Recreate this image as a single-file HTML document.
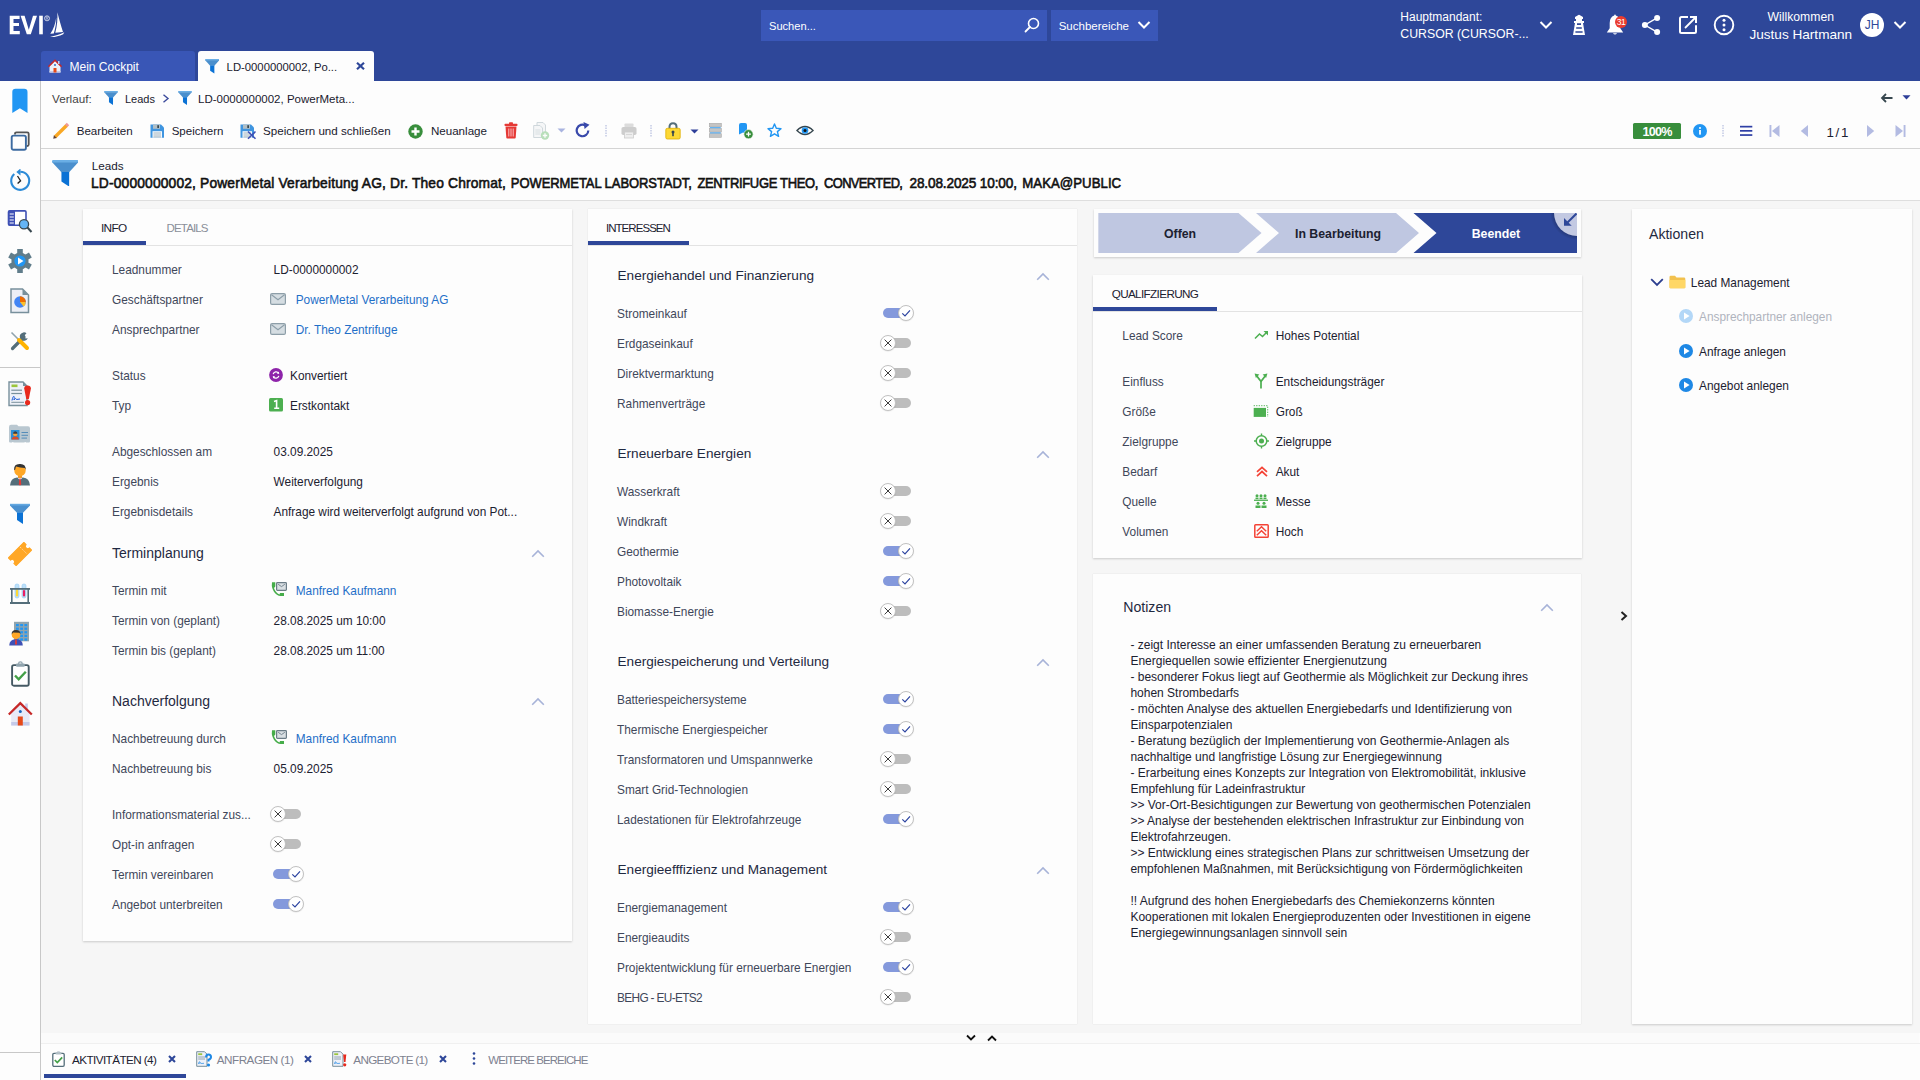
<!DOCTYPE html><html><head><meta charset="utf-8"><title>EVI Lead</title><style>
*{margin:0;padding:0;box-sizing:border-box}
html,body{width:1920px;height:1080px;overflow:hidden;background:#fdfdfd;font-family:"Liberation Sans",sans-serif}
.a{position:absolute}
.t{position:absolute;white-space:nowrap}
</style></head><body><div class="a" style="left:0px;top:0px;width:1920px;height:81px;background:#2e4799"></div>
<div class="a" style="left:41px;top:201px;width:1879px;height:832px;background:#f6f6f6"></div>
<div class="a" style="left:41px;top:148px;width:1879px;height:1px;background:#d4d4d4"></div>
<div class="a" style="left:41px;top:200px;width:1879px;height:1px;background:#dedede"></div>
<div class="a" style="left:40px;top:81px;width:1px;height:999px;background:#c8c8c8"></div>
<div class="a" style="left:0px;top:367px;width:40px;height:1px;background:#c8c8c8"></div>
<div class="a" style="left:0px;top:1052px;width:40px;height:1px;background:#c8c8c8"></div>
<div class="a" style="left:41px;top:1033px;width:1878px;height:10px;background:#fbfbfb"></div>
<div class="a" style="left:41px;top:1043px;width:1879px;height:1px;background:#f0f0f0"></div>
<div class="a" style="left:761px;top:10px;width:286px;height:31px;background:#3a57b8"></div>
<div class="t" style="left:769.0px;top:21px;font-size:11.1px;line-height:11.1px;color:#fff;font-weight:400;">Suchen...</div>
<svg class="a" style="left:1024px;top:17px;" width="16" height="16" viewBox="0 0 16 16"><circle cx="9.5" cy="6.5" r="5" fill="none" stroke="#fff" stroke-width="1.6"/><line x1="6" y1="10" x2="1.5" y2="14.5" stroke="#fff" stroke-width="1.8" stroke-linecap="round"/></svg>
<div class="a" style="left:1051px;top:10px;width:107px;height:31px;background:#3a57b8"></div>
<div class="t" style="left:1058.7px;top:21px;font-size:11.5px;line-height:11.5px;color:#fff;font-weight:400;">Suchbereiche</div>
<svg class="a" style="left:1137px;top:20px;" width="14" height="10" viewBox="0 0 14 10"><polyline points="1.5,2 7,7.5 12.5,2" fill="none" stroke="#fff" stroke-width="2"/></svg>
<div class="t" style="left:1400.3px;top:11px;font-size:12px;line-height:12px;color:#fff;font-weight:400;">Hauptmandant:</div>
<div class="t" style="left:1400.3px;top:28px;font-size:12.3px;line-height:12.3px;color:#fff;font-weight:400;">CURSOR (CURSOR-...</div>
<svg class="a" style="left:1539px;top:20px;" width="14" height="10" viewBox="0 0 14 10"><polyline points="1.5,2 7,7.5 12.5,2" fill="none" stroke="#fff" stroke-width="2"/></svg>
<div class="t" style="left:1767.6px;top:11px;font-size:12.2px;line-height:12.2px;color:#fff;font-weight:400;">Willkommen</div>
<div class="t" style="left:1749.4px;top:28px;font-size:13.6px;line-height:13.6px;color:#fff;font-weight:400;">Justus Hartmann</div>
<div class="a" style="left:1860px;top:13px;width:24px;height:24px;border-radius:50%;background:#fff;color:#2e4799;font-size:12px;line-height:24px;text-align:center">JH</div>
<svg class="a" style="left:1893px;top:20px;" width="14" height="10" viewBox="0 0 14 10"><polyline points="1.5,2 7,7.5 12.5,2" fill="none" stroke="#fff" stroke-width="2"/></svg>
<div class="a" style="left:41px;top:51px;width:154px;height:30px;background:#3956b6;border-radius:3px 3px 0 0"></div>
<div class="t" style="left:69.5px;top:61px;font-size:12.0px;line-height:12.0px;color:#fff;font-weight:400;">Mein Cockpit</div>
<div class="a" style="left:198px;top:51px;width:176px;height:30px;background:#fdfdfd;border-radius:3px 3px 0 0"></div>
<div class="t" style="left:226.6px;top:62px;font-size:11.3px;line-height:11.3px;color:#1a1a2e;font-weight:400;">LD-0000000002, Po...</div>
<div class="t" style="left:52.0px;top:93px;font-size:11.7px;line-height:11.7px;color:#444;font-weight:400;">Verlauf:</div>
<div class="t" style="left:125.0px;top:94px;font-size:11.0px;line-height:11.0px;color:#1a1a2e;font-weight:400;">Leads</div>
<div class="t" style="left:198.0px;top:94px;font-size:11.5px;line-height:11.5px;color:#1a1a2e;font-weight:400;">LD-0000000002, PowerMeta...</div>
<div class="t" style="left:76.7px;top:125px;font-size:11.6px;line-height:11.6px;color:#1a1a2e;font-weight:400;">Bearbeiten</div>
<div class="t" style="left:171.7px;top:126px;font-size:11.5px;line-height:11.5px;color:#1a1a2e;font-weight:400;">Speichern</div>
<div class="t" style="left:263.0px;top:125px;font-size:11.6px;line-height:11.6px;color:#1a1a2e;font-weight:400;">Speichern und schließen</div>
<div class="t" style="left:430.9px;top:125px;font-size:11.6px;line-height:11.6px;color:#1a1a2e;font-weight:400;">Neuanlage</div>
<div class="t" style="left:91.7px;top:160px;font-size:11.7px;line-height:11.7px;color:#1a1a2e;font-weight:400;">Leads</div>
<div class="t" style="left:91.0px;top:177px;font-size:13.8px;line-height:13.8px;color:#111;font-weight:400;letter-spacing:0.160px;-webkit-text-stroke:0.55px #111;transform:scaleY(1.1);transform-origin:0 85%">LD-0000000002, PowerMetal Verarbeitung AG, Dr. Theo Chromat,</div>
<div class="t" style="left:510.8px;top:177px;font-size:13.0px;line-height:13.0px;color:#111;font-weight:400;letter-spacing:-0.072px;-webkit-text-stroke:0.55px #111;transform:scaleY(1.1);transform-origin:0 85%">POWERMETAL LABORSTADT,</div>
<div class="t" style="left:697.4px;top:177px;font-size:13.0px;line-height:13.0px;color:#111;font-weight:400;letter-spacing:-0.344px;-webkit-text-stroke:0.55px #111;transform:scaleY(1.1);transform-origin:0 85%">ZENTRIFUGE THEO,</div>
<div class="t" style="left:824.0px;top:178px;font-size:12.9px;line-height:12.9px;color:#111;font-weight:400;letter-spacing:-0.594px;-webkit-text-stroke:0.55px #111;transform:scaleY(1.1);transform-origin:0 85%">CONVERTED,</div>
<div class="t" style="left:909.5px;top:177px;font-size:13.6px;line-height:13.6px;color:#111;font-weight:400;letter-spacing:-0.135px;-webkit-text-stroke:0.55px #111;transform:scaleY(1.1);transform-origin:0 85%">28.08.2025 10:00,</div>
<div class="t" style="left:1022.3px;top:177px;font-size:13.2px;line-height:13.2px;color:#111;font-weight:400;letter-spacing:0.041px;-webkit-text-stroke:0.55px #111;transform:scaleY(1.1);transform-origin:0 85%">MAKA@PUBLIC</div>
<div class="a" style="left:83px;top:209px;width:489px;height:732px;background:#fdfdfd;box-shadow:0 1px 2px rgba(0,0,0,0.18)"></div>
<div class="a" style="left:588px;top:209px;width:489px;height:815px;background:#fdfdfd;box-shadow:0 0 1px rgba(0,0,0,0.15)"></div>
<div class="a" style="left:1094px;top:209px;width:487px;height:48px;background:#fdfdfd;box-shadow:0 1px 2px rgba(0,0,0,0.18)"></div>
<div class="a" style="left:1093px;top:275px;width:489px;height:283px;background:#fdfdfd;box-shadow:0 1px 2px rgba(0,0,0,0.18)"></div>
<div class="a" style="left:1093px;top:574px;width:488px;height:450px;background:#fdfdfd;box-shadow:0 0 1px rgba(0,0,0,0.15)"></div>
<div class="a" style="left:1632px;top:209px;width:280px;height:815px;background:#fdfdfd;box-shadow:0 1px 2px rgba(0,0,0,0.18)"></div>
<div class="a" style="left:83px;top:245px;width:489px;height:1px;background:#e3e3e3"></div>
<div class="a" style="left:83px;top:241px;width:63px;height:4px;background:#2e4799"></div>
<div class="t" style="left:100.9px;top:223px;font-size:11.8px;line-height:11.8px;color:#1c2130;font-weight:400;letter-spacing:-0.629px;">INFO</div>
<div class="t" style="left:166.6px;top:223px;font-size:11.5px;line-height:11.5px;color:#8a8f99;font-weight:400;letter-spacing:-0.863px;">DETAILS</div>
<div class="t" style="left:112.0px;top:265px;font-size:11.85px;line-height:11.85px;color:#3f475a;font-weight:400;">Leadnummer</div>
<div class="t" style="left:273.6px;top:265px;font-size:11.85px;line-height:11.85px;color:#1c2130;font-weight:400;">LD-0000000002</div>
<div class="t" style="left:112.0px;top:295px;font-size:11.85px;line-height:11.85px;color:#3f475a;font-weight:400;">Geschäftspartner</div>
<div class="t" style="left:295.7px;top:295px;font-size:11.85px;line-height:11.85px;color:#1f6fc8;font-weight:400;">PowerMetal Verarbeitung AG</div>
<div class="t" style="left:112.0px;top:325px;font-size:11.85px;line-height:11.85px;color:#3f475a;font-weight:400;">Ansprechpartner</div>
<div class="t" style="left:295.7px;top:325px;font-size:11.85px;line-height:11.85px;color:#1f6fc8;font-weight:400;">Dr. Theo Zentrifuge</div>
<div class="t" style="left:112.0px;top:371px;font-size:11.85px;line-height:11.85px;color:#3f475a;font-weight:400;">Status</div>
<div class="t" style="left:290.0px;top:371px;font-size:11.85px;line-height:11.85px;color:#1c2130;font-weight:400;">Konvertiert</div>
<div class="t" style="left:112.0px;top:401px;font-size:11.85px;line-height:11.85px;color:#3f475a;font-weight:400;">Typ</div>
<div class="t" style="left:290.0px;top:401px;font-size:11.85px;line-height:11.85px;color:#1c2130;font-weight:400;">Erstkontakt</div>
<div class="t" style="left:112.0px;top:447px;font-size:11.85px;line-height:11.85px;color:#3f475a;font-weight:400;">Abgeschlossen am</div>
<div class="t" style="left:273.6px;top:447px;font-size:11.85px;line-height:11.85px;color:#1c2130;font-weight:400;">03.09.2025</div>
<div class="t" style="left:112.0px;top:477px;font-size:11.85px;line-height:11.85px;color:#3f475a;font-weight:400;">Ergebnis</div>
<div class="t" style="left:273.6px;top:477px;font-size:11.85px;line-height:11.85px;color:#1c2130;font-weight:400;">Weiterverfolgung</div>
<div class="t" style="left:112.0px;top:507px;font-size:11.85px;line-height:11.85px;color:#3f475a;font-weight:400;">Ergebnisdetails</div>
<div class="t" style="left:273.6px;top:507px;font-size:11.85px;line-height:11.85px;color:#1c2130;font-weight:400;">Anfrage wird weiterverfolgt aufgrund von Pot...</div>
<div class="t" style="left:112.0px;top:586px;font-size:11.85px;line-height:11.85px;color:#3f475a;font-weight:400;">Termin mit</div>
<div class="t" style="left:295.7px;top:586px;font-size:11.85px;line-height:11.85px;color:#1f6fc8;font-weight:400;">Manfred Kaufmann</div>
<div class="t" style="left:112.0px;top:616px;font-size:11.85px;line-height:11.85px;color:#3f475a;font-weight:400;">Termin von (geplant)</div>
<div class="t" style="left:273.6px;top:616px;font-size:11.85px;line-height:11.85px;color:#1c2130;font-weight:400;">28.08.2025 um 10:00</div>
<div class="t" style="left:112.0px;top:646px;font-size:11.85px;line-height:11.85px;color:#3f475a;font-weight:400;">Termin bis (geplant)</div>
<div class="t" style="left:273.6px;top:646px;font-size:11.85px;line-height:11.85px;color:#1c2130;font-weight:400;">28.08.2025 um 11:00</div>
<div class="t" style="left:112.0px;top:734px;font-size:11.85px;line-height:11.85px;color:#3f475a;font-weight:400;">Nachbetreuung durch</div>
<div class="t" style="left:295.7px;top:734px;font-size:11.85px;line-height:11.85px;color:#1f6fc8;font-weight:400;">Manfred Kaufmann</div>
<div class="t" style="left:112.0px;top:764px;font-size:11.85px;line-height:11.85px;color:#3f475a;font-weight:400;">Nachbetreuung bis</div>
<div class="t" style="left:273.6px;top:764px;font-size:11.85px;line-height:11.85px;color:#1c2130;font-weight:400;">05.09.2025</div>
<div class="t" style="left:112.0px;top:546px;font-size:14.0px;line-height:14.0px;color:#1f2941;font-weight:400;">Terminplanung</div>
<svg class="a" style="left:531px;top:548.5px;" width="14" height="9" viewBox="0 0 14 9"><polyline points="1.2,7.8 7,2 12.8,7.8" fill="none" stroke="#a7b3d8" stroke-width="1.6"/></svg>
<div class="t" style="left:112.0px;top:694px;font-size:14.0px;line-height:14.0px;color:#1f2941;font-weight:400;">Nachverfolgung</div>
<svg class="a" style="left:531px;top:696.5px;" width="14" height="9" viewBox="0 0 14 9"><polyline points="1.2,7.8 7,2 12.8,7.8" fill="none" stroke="#a7b3d8" stroke-width="1.6"/></svg>
<div class="t" style="left:112.0px;top:810px;font-size:11.85px;line-height:11.85px;color:#3f475a;font-weight:400;">Informationsmaterial zus...</div>
<div class="a" style="left:277px;top:809px;width:24px;height:10px;border-radius:5px;background:#bdbdbd"></div>
<div class="a" style="left:270px;top:806px;width:16px;height:16px;border-radius:50%;background:#fff;border:1.3px solid #c2c2c2;box-shadow:0 0.5px 1px rgba(0,0,0,0.10)"></div>
<svg class="a" style="left:270px;top:806px;" width="16" height="16" viewBox="0 0 16 16"><path d="M4.6,4.6 L11.4,11.4 M11.4,4.6 L4.6,11.4" stroke="#333" stroke-width="0.95"/></svg>
<div class="t" style="left:112.0px;top:840px;font-size:11.85px;line-height:11.85px;color:#3f475a;font-weight:400;">Opt-in anfragen</div>
<div class="a" style="left:277px;top:839px;width:24px;height:10px;border-radius:5px;background:#bdbdbd"></div>
<div class="a" style="left:270px;top:836px;width:16px;height:16px;border-radius:50%;background:#fff;border:1.3px solid #c2c2c2;box-shadow:0 0.5px 1px rgba(0,0,0,0.10)"></div>
<svg class="a" style="left:270px;top:836px;" width="16" height="16" viewBox="0 0 16 16"><path d="M4.6,4.6 L11.4,11.4 M11.4,4.6 L4.6,11.4" stroke="#333" stroke-width="0.95"/></svg>
<div class="t" style="left:112.0px;top:870px;font-size:11.85px;line-height:11.85px;color:#3f475a;font-weight:400;">Termin vereinbaren</div>
<div class="a" style="left:273px;top:869px;width:24px;height:10px;border-radius:5px;background:#8499dc"></div>
<div class="a" style="left:288px;top:866px;width:16px;height:16px;border-radius:50%;background:#fff;border:1.3px solid #c2c2c2;box-shadow:0 0.5px 1px rgba(0,0,0,0.10)"></div>
<svg class="a" style="left:288px;top:866px;" width="16" height="16" viewBox="0 0 16 16"><polyline points="4.3,8.4 7,11 12,5.3" fill="none" stroke="#2c44a0" stroke-width="1.2"/></svg>
<div class="t" style="left:112.0px;top:900px;font-size:11.85px;line-height:11.85px;color:#3f475a;font-weight:400;">Angebot unterbreiten</div>
<div class="a" style="left:273px;top:899px;width:24px;height:10px;border-radius:5px;background:#8499dc"></div>
<div class="a" style="left:288px;top:896px;width:16px;height:16px;border-radius:50%;background:#fff;border:1.3px solid #c2c2c2;box-shadow:0 0.5px 1px rgba(0,0,0,0.10)"></div>
<svg class="a" style="left:288px;top:896px;" width="16" height="16" viewBox="0 0 16 16"><polyline points="4.3,8.4 7,11 12,5.3" fill="none" stroke="#2c44a0" stroke-width="1.2"/></svg>
<div class="a" style="left:588px;top:245px;width:489px;height:1px;background:#e3e3e3"></div>
<div class="a" style="left:588px;top:241px;width:101px;height:4px;background:#2e4799"></div>
<div class="t" style="left:605.9px;top:223px;font-size:11.5px;line-height:11.5px;color:#1c2130;font-weight:400;letter-spacing:-0.943px;">INTERESSEN</div>
<div class="t" style="left:617.5px;top:269px;font-size:13.6px;line-height:13.6px;color:#1f2941;font-weight:400;">Energiehandel und Finanzierung</div>
<svg class="a" style="left:1036px;top:271.5px;" width="14" height="9" viewBox="0 0 14 9"><polyline points="1.2,7.8 7,2 12.8,7.8" fill="none" stroke="#a7b3d8" stroke-width="1.6"/></svg>
<div class="t" style="left:617.0px;top:309px;font-size:11.85px;line-height:11.85px;color:#3f475a;font-weight:400;">Stromeinkauf</div>
<div class="a" style="left:883px;top:307.5px;width:24px;height:10px;border-radius:5px;background:#8499dc"></div>
<div class="a" style="left:898px;top:304.5px;width:16px;height:16px;border-radius:50%;background:#fff;border:1.3px solid #c2c2c2;box-shadow:0 0.5px 1px rgba(0,0,0,0.10)"></div>
<svg class="a" style="left:898px;top:304.5px;" width="16" height="16" viewBox="0 0 16 16"><polyline points="4.3,8.4 7,11 12,5.3" fill="none" stroke="#2c44a0" stroke-width="1.2"/></svg>
<div class="t" style="left:617.0px;top:339px;font-size:11.85px;line-height:11.85px;color:#3f475a;font-weight:400;">Erdgaseinkauf</div>
<div class="a" style="left:887px;top:337.5px;width:24px;height:10px;border-radius:5px;background:#bdbdbd"></div>
<div class="a" style="left:880px;top:334.5px;width:16px;height:16px;border-radius:50%;background:#fff;border:1.3px solid #c2c2c2;box-shadow:0 0.5px 1px rgba(0,0,0,0.10)"></div>
<svg class="a" style="left:880px;top:334.5px;" width="16" height="16" viewBox="0 0 16 16"><path d="M4.6,4.6 L11.4,11.4 M11.4,4.6 L4.6,11.4" stroke="#333" stroke-width="0.95"/></svg>
<div class="t" style="left:617.0px;top:369px;font-size:11.85px;line-height:11.85px;color:#3f475a;font-weight:400;">Direktvermarktung</div>
<div class="a" style="left:887px;top:367.5px;width:24px;height:10px;border-radius:5px;background:#bdbdbd"></div>
<div class="a" style="left:880px;top:364.5px;width:16px;height:16px;border-radius:50%;background:#fff;border:1.3px solid #c2c2c2;box-shadow:0 0.5px 1px rgba(0,0,0,0.10)"></div>
<svg class="a" style="left:880px;top:364.5px;" width="16" height="16" viewBox="0 0 16 16"><path d="M4.6,4.6 L11.4,11.4 M11.4,4.6 L4.6,11.4" stroke="#333" stroke-width="0.95"/></svg>
<div class="t" style="left:617.0px;top:399px;font-size:11.85px;line-height:11.85px;color:#3f475a;font-weight:400;">Rahmenverträge</div>
<div class="a" style="left:887px;top:397.5px;width:24px;height:10px;border-radius:5px;background:#bdbdbd"></div>
<div class="a" style="left:880px;top:394.5px;width:16px;height:16px;border-radius:50%;background:#fff;border:1.3px solid #c2c2c2;box-shadow:0 0.5px 1px rgba(0,0,0,0.10)"></div>
<svg class="a" style="left:880px;top:394.5px;" width="16" height="16" viewBox="0 0 16 16"><path d="M4.6,4.6 L11.4,11.4 M11.4,4.6 L4.6,11.4" stroke="#333" stroke-width="0.95"/></svg>
<div class="t" style="left:617.5px;top:447px;font-size:13.6px;line-height:13.6px;color:#1f2941;font-weight:400;">Erneuerbare Energien</div>
<svg class="a" style="left:1036px;top:449.5px;" width="14" height="9" viewBox="0 0 14 9"><polyline points="1.2,7.8 7,2 12.8,7.8" fill="none" stroke="#a7b3d8" stroke-width="1.6"/></svg>
<div class="t" style="left:617.0px;top:487px;font-size:11.85px;line-height:11.85px;color:#3f475a;font-weight:400;">Wasserkraft</div>
<div class="a" style="left:887px;top:485.5px;width:24px;height:10px;border-radius:5px;background:#bdbdbd"></div>
<div class="a" style="left:880px;top:482.5px;width:16px;height:16px;border-radius:50%;background:#fff;border:1.3px solid #c2c2c2;box-shadow:0 0.5px 1px rgba(0,0,0,0.10)"></div>
<svg class="a" style="left:880px;top:482.5px;" width="16" height="16" viewBox="0 0 16 16"><path d="M4.6,4.6 L11.4,11.4 M11.4,4.6 L4.6,11.4" stroke="#333" stroke-width="0.95"/></svg>
<div class="t" style="left:617.0px;top:517px;font-size:11.85px;line-height:11.85px;color:#3f475a;font-weight:400;">Windkraft</div>
<div class="a" style="left:887px;top:515.5px;width:24px;height:10px;border-radius:5px;background:#bdbdbd"></div>
<div class="a" style="left:880px;top:512.5px;width:16px;height:16px;border-radius:50%;background:#fff;border:1.3px solid #c2c2c2;box-shadow:0 0.5px 1px rgba(0,0,0,0.10)"></div>
<svg class="a" style="left:880px;top:512.5px;" width="16" height="16" viewBox="0 0 16 16"><path d="M4.6,4.6 L11.4,11.4 M11.4,4.6 L4.6,11.4" stroke="#333" stroke-width="0.95"/></svg>
<div class="t" style="left:617.0px;top:547px;font-size:11.85px;line-height:11.85px;color:#3f475a;font-weight:400;">Geothermie</div>
<div class="a" style="left:883px;top:545.5px;width:24px;height:10px;border-radius:5px;background:#8499dc"></div>
<div class="a" style="left:898px;top:542.5px;width:16px;height:16px;border-radius:50%;background:#fff;border:1.3px solid #c2c2c2;box-shadow:0 0.5px 1px rgba(0,0,0,0.10)"></div>
<svg class="a" style="left:898px;top:542.5px;" width="16" height="16" viewBox="0 0 16 16"><polyline points="4.3,8.4 7,11 12,5.3" fill="none" stroke="#2c44a0" stroke-width="1.2"/></svg>
<div class="t" style="left:617.0px;top:577px;font-size:11.85px;line-height:11.85px;color:#3f475a;font-weight:400;">Photovoltaik</div>
<div class="a" style="left:883px;top:575.5px;width:24px;height:10px;border-radius:5px;background:#8499dc"></div>
<div class="a" style="left:898px;top:572.5px;width:16px;height:16px;border-radius:50%;background:#fff;border:1.3px solid #c2c2c2;box-shadow:0 0.5px 1px rgba(0,0,0,0.10)"></div>
<svg class="a" style="left:898px;top:572.5px;" width="16" height="16" viewBox="0 0 16 16"><polyline points="4.3,8.4 7,11 12,5.3" fill="none" stroke="#2c44a0" stroke-width="1.2"/></svg>
<div class="t" style="left:617.0px;top:607px;font-size:11.85px;line-height:11.85px;color:#3f475a;font-weight:400;">Biomasse-Energie</div>
<div class="a" style="left:887px;top:605.5px;width:24px;height:10px;border-radius:5px;background:#bdbdbd"></div>
<div class="a" style="left:880px;top:602.5px;width:16px;height:16px;border-radius:50%;background:#fff;border:1.3px solid #c2c2c2;box-shadow:0 0.5px 1px rgba(0,0,0,0.10)"></div>
<svg class="a" style="left:880px;top:602.5px;" width="16" height="16" viewBox="0 0 16 16"><path d="M4.6,4.6 L11.4,11.4 M11.4,4.6 L4.6,11.4" stroke="#333" stroke-width="0.95"/></svg>
<div class="t" style="left:617.5px;top:655px;font-size:13.6px;line-height:13.6px;color:#1f2941;font-weight:400;">Energiespeicherung und Verteilung</div>
<svg class="a" style="left:1036px;top:657.5px;" width="14" height="9" viewBox="0 0 14 9"><polyline points="1.2,7.8 7,2 12.8,7.8" fill="none" stroke="#a7b3d8" stroke-width="1.6"/></svg>
<div class="t" style="left:617.0px;top:695px;font-size:11.85px;line-height:11.85px;color:#3f475a;font-weight:400;">Batteriespeichersysteme</div>
<div class="a" style="left:883px;top:693.5px;width:24px;height:10px;border-radius:5px;background:#8499dc"></div>
<div class="a" style="left:898px;top:690.5px;width:16px;height:16px;border-radius:50%;background:#fff;border:1.3px solid #c2c2c2;box-shadow:0 0.5px 1px rgba(0,0,0,0.10)"></div>
<svg class="a" style="left:898px;top:690.5px;" width="16" height="16" viewBox="0 0 16 16"><polyline points="4.3,8.4 7,11 12,5.3" fill="none" stroke="#2c44a0" stroke-width="1.2"/></svg>
<div class="t" style="left:617.0px;top:725px;font-size:11.85px;line-height:11.85px;color:#3f475a;font-weight:400;">Thermische Energiespeicher</div>
<div class="a" style="left:883px;top:723.5px;width:24px;height:10px;border-radius:5px;background:#8499dc"></div>
<div class="a" style="left:898px;top:720.5px;width:16px;height:16px;border-radius:50%;background:#fff;border:1.3px solid #c2c2c2;box-shadow:0 0.5px 1px rgba(0,0,0,0.10)"></div>
<svg class="a" style="left:898px;top:720.5px;" width="16" height="16" viewBox="0 0 16 16"><polyline points="4.3,8.4 7,11 12,5.3" fill="none" stroke="#2c44a0" stroke-width="1.2"/></svg>
<div class="t" style="left:617.0px;top:755px;font-size:11.85px;line-height:11.85px;color:#3f475a;font-weight:400;">Transformatoren und Umspannwerke</div>
<div class="a" style="left:887px;top:753.5px;width:24px;height:10px;border-radius:5px;background:#bdbdbd"></div>
<div class="a" style="left:880px;top:750.5px;width:16px;height:16px;border-radius:50%;background:#fff;border:1.3px solid #c2c2c2;box-shadow:0 0.5px 1px rgba(0,0,0,0.10)"></div>
<svg class="a" style="left:880px;top:750.5px;" width="16" height="16" viewBox="0 0 16 16"><path d="M4.6,4.6 L11.4,11.4 M11.4,4.6 L4.6,11.4" stroke="#333" stroke-width="0.95"/></svg>
<div class="t" style="left:617.0px;top:785px;font-size:11.85px;line-height:11.85px;color:#3f475a;font-weight:400;">Smart Grid-Technologien</div>
<div class="a" style="left:887px;top:783.5px;width:24px;height:10px;border-radius:5px;background:#bdbdbd"></div>
<div class="a" style="left:880px;top:780.5px;width:16px;height:16px;border-radius:50%;background:#fff;border:1.3px solid #c2c2c2;box-shadow:0 0.5px 1px rgba(0,0,0,0.10)"></div>
<svg class="a" style="left:880px;top:780.5px;" width="16" height="16" viewBox="0 0 16 16"><path d="M4.6,4.6 L11.4,11.4 M11.4,4.6 L4.6,11.4" stroke="#333" stroke-width="0.95"/></svg>
<div class="t" style="left:617.0px;top:815px;font-size:11.85px;line-height:11.85px;color:#3f475a;font-weight:400;">Ladestationen für Elektrofahrzeuge</div>
<div class="a" style="left:883px;top:813.5px;width:24px;height:10px;border-radius:5px;background:#8499dc"></div>
<div class="a" style="left:898px;top:810.5px;width:16px;height:16px;border-radius:50%;background:#fff;border:1.3px solid #c2c2c2;box-shadow:0 0.5px 1px rgba(0,0,0,0.10)"></div>
<svg class="a" style="left:898px;top:810.5px;" width="16" height="16" viewBox="0 0 16 16"><polyline points="4.3,8.4 7,11 12,5.3" fill="none" stroke="#2c44a0" stroke-width="1.2"/></svg>
<div class="t" style="left:617.5px;top:863px;font-size:13.6px;line-height:13.6px;color:#1f2941;font-weight:400;">Energieefffizienz und Management</div>
<svg class="a" style="left:1036px;top:865.5px;" width="14" height="9" viewBox="0 0 14 9"><polyline points="1.2,7.8 7,2 12.8,7.8" fill="none" stroke="#a7b3d8" stroke-width="1.6"/></svg>
<div class="t" style="left:617.0px;top:903px;font-size:11.85px;line-height:11.85px;color:#3f475a;font-weight:400;">Energiemanagement</div>
<div class="a" style="left:883px;top:901.5px;width:24px;height:10px;border-radius:5px;background:#8499dc"></div>
<div class="a" style="left:898px;top:898.5px;width:16px;height:16px;border-radius:50%;background:#fff;border:1.3px solid #c2c2c2;box-shadow:0 0.5px 1px rgba(0,0,0,0.10)"></div>
<svg class="a" style="left:898px;top:898.5px;" width="16" height="16" viewBox="0 0 16 16"><polyline points="4.3,8.4 7,11 12,5.3" fill="none" stroke="#2c44a0" stroke-width="1.2"/></svg>
<div class="t" style="left:617.0px;top:933px;font-size:11.85px;line-height:11.85px;color:#3f475a;font-weight:400;">Energieaudits</div>
<div class="a" style="left:887px;top:931.5px;width:24px;height:10px;border-radius:5px;background:#bdbdbd"></div>
<div class="a" style="left:880px;top:928.5px;width:16px;height:16px;border-radius:50%;background:#fff;border:1.3px solid #c2c2c2;box-shadow:0 0.5px 1px rgba(0,0,0,0.10)"></div>
<svg class="a" style="left:880px;top:928.5px;" width="16" height="16" viewBox="0 0 16 16"><path d="M4.6,4.6 L11.4,11.4 M11.4,4.6 L4.6,11.4" stroke="#333" stroke-width="0.95"/></svg>
<div class="t" style="left:617.0px;top:963px;font-size:11.85px;line-height:11.85px;color:#3f475a;font-weight:400;">Projektentwicklung für erneuerbare Energien</div>
<div class="a" style="left:883px;top:961.5px;width:24px;height:10px;border-radius:5px;background:#8499dc"></div>
<div class="a" style="left:898px;top:958.5px;width:16px;height:16px;border-radius:50%;background:#fff;border:1.3px solid #c2c2c2;box-shadow:0 0.5px 1px rgba(0,0,0,0.10)"></div>
<svg class="a" style="left:898px;top:958.5px;" width="16" height="16" viewBox="0 0 16 16"><polyline points="4.3,8.4 7,11 12,5.3" fill="none" stroke="#2c44a0" stroke-width="1.2"/></svg>
<div class="t" style="left:617.0px;top:993px;font-size:11.85px;line-height:11.85px;color:#3f475a;font-weight:400;letter-spacing:-0.65px">BEHG - EU-ETS2</div>
<div class="a" style="left:887px;top:991.5px;width:24px;height:10px;border-radius:5px;background:#bdbdbd"></div>
<div class="a" style="left:880px;top:988.5px;width:16px;height:16px;border-radius:50%;background:#fff;border:1.3px solid #c2c2c2;box-shadow:0 0.5px 1px rgba(0,0,0,0.10)"></div>
<svg class="a" style="left:880px;top:988.5px;" width="16" height="16" viewBox="0 0 16 16"><path d="M4.6,4.6 L11.4,11.4 M11.4,4.6 L4.6,11.4" stroke="#333" stroke-width="0.95"/></svg>
<svg class="a" style="left:270px;top:293px;" width="16" height="12" viewBox="0 0 16 12"><rect x="0.6" y="0.6" width="14.8" height="10.8" rx="1.5" fill="#d5dde2" stroke="#8d9ea8" stroke-width="1.2"/><polyline points="1.5,1.8 8,6.8 14.5,1.8" fill="none" stroke="#8d9ea8" stroke-width="1.1"/></svg>
<svg class="a" style="left:270px;top:323px;" width="16" height="12" viewBox="0 0 16 12"><rect x="0.6" y="0.6" width="14.8" height="10.8" rx="1.5" fill="#d5dde2" stroke="#8d9ea8" stroke-width="1.2"/><polyline points="1.5,1.8 8,6.8 14.5,1.8" fill="none" stroke="#8d9ea8" stroke-width="1.1"/></svg>
<svg class="a" style="left:270.5px;top:582px;" width="16" height="15" viewBox="0 0 16 15"><path d="M1,0.3 L4.3,0.3 L4.3,4.5 L3,6 C4,9 6,11.5 8.5,12.5 L9,11 L13,11 L13,14 L9.5,14 C5,13.5 1.5,9 0.8,4 Z" fill="#46ad4a"/><rect x="5.6" y="0.6" width="9.8" height="7.8" rx="0.8" fill="#d9dfe3" stroke="#6b7c87" stroke-width="1.2"/><polyline points="7.2,2.3 10.5,4.6 13.8,2.3" fill="none" stroke="#6b7c87" stroke-width="0.9"/></svg>
<svg class="a" style="left:270.5px;top:730px;" width="16" height="15" viewBox="0 0 16 15"><path d="M1,0.3 L4.3,0.3 L4.3,4.5 L3,6 C4,9 6,11.5 8.5,12.5 L9,11 L13,11 L13,14 L9.5,14 C5,13.5 1.5,9 0.8,4 Z" fill="#46ad4a"/><rect x="5.6" y="0.6" width="9.8" height="7.8" rx="0.8" fill="#d9dfe3" stroke="#6b7c87" stroke-width="1.2"/><polyline points="7.2,2.3 10.5,4.6 13.8,2.3" fill="none" stroke="#6b7c87" stroke-width="0.9"/></svg>
<svg class="a" style="left:269px;top:368px;" width="14" height="14" viewBox="0 0 14 14"><circle cx="7" cy="7" r="6.9" fill="#8e24aa"/><path d="M4.2,6.2 A3,3 0 0 1 9.6,5.2 M9.8,7.8 A3,3 0 0 1 4.4,8.8" fill="none" stroke="#fff" stroke-width="1.3"/><path d="M9.9,3.6 L10.2,6 L7.9,5.6Z M4.1,10.4 L3.8,8 L6.1,8.4Z" fill="#fff"/></svg>
<svg class="a" style="left:269px;top:398px;" width="14" height="14" viewBox="0 0 14 14"><rect x="0" y="0" width="14" height="13.5" rx="1.5" fill="#4caf50"/><path d="M5,3.5 L7.6,2.6 L7.6,10.2 L10.2,10.2 M5.2,10.2 L7.6,10.2" fill="none" stroke="#fff" stroke-width="1.6"/></svg>
<svg class="a" style="left:1094px;top:209px;" width="487" height="48" viewBox="0 0 487 48"><polygon points="4.3,4 144.5,4 167.5,24 144.5,44 4.3,44" fill="#bfc7e1"/><polygon points="162,4 302,4 325,24 302,44 162,44 185,24" fill="#bfc7e1"/><polygon points="319.5,4 483,4 483,44 319.5,44 342.5,24" fill="#2e4799"/><defs><radialGradient id="sh" cx="483" cy="4" r="27" gradientUnits="userSpaceOnUse"><stop offset="0.8" stop-color="#000" stop-opacity="0.25"/><stop offset="1" stop-color="#000" stop-opacity="0"/></radialGradient><clipPath id="cp"><rect x="300" y="4" width="183" height="40"/></clipPath></defs><g clip-path="url(#cp)"><circle cx="483" cy="4" r="27" fill="url(#sh)"/><circle cx="483" cy="4" r="23" fill="#c3c9e2"/><line x1="482.5" y1="4.5" x2="473" y2="14" stroke="#2e4799" stroke-width="2"/><polygon points="470,9 470,16.8 477.7,16.8" fill="#2e4799"/></g></svg>
<div class="t" style="left:1164.0px;top:228px;font-size:12.3px;line-height:12.3px;color:#1c2130;font-weight:700;">Offen</div>
<div class="t" style="left:1295.0px;top:228px;font-size:12.3px;line-height:12.3px;color:#1c2130;font-weight:700;">In Bearbeitung</div>
<div class="t" style="left:1471.7px;top:228px;font-size:12.3px;line-height:12.3px;color:#fff;font-weight:700;">Beendet</div>
<div class="a" style="left:1093px;top:311px;width:489px;height:1px;background:#e3e3e3"></div>
<div class="a" style="left:1093px;top:307px;width:124px;height:4px;background:#2e4799"></div>
<div class="t" style="left:1111.7px;top:288px;font-size:11.7px;line-height:11.7px;color:#1c2130;font-weight:400;letter-spacing:-0.634px;">QUALIFZIERUNG</div>
<div class="t" style="left:1122.3px;top:331px;font-size:11.85px;line-height:11.85px;color:#3f475a;font-weight:400;">Lead Score</div>
<div class="t" style="left:1275.7px;top:331px;font-size:11.85px;line-height:11.85px;color:#1c2130;font-weight:400;">Hohes Potential</div>
<div class="t" style="left:1122.3px;top:377px;font-size:11.85px;line-height:11.85px;color:#3f475a;font-weight:400;">Einfluss</div>
<div class="t" style="left:1275.7px;top:377px;font-size:11.85px;line-height:11.85px;color:#1c2130;font-weight:400;">Entscheidungsträger</div>
<div class="t" style="left:1122.3px;top:407px;font-size:11.85px;line-height:11.85px;color:#3f475a;font-weight:400;">Größe</div>
<div class="t" style="left:1275.7px;top:407px;font-size:11.85px;line-height:11.85px;color:#1c2130;font-weight:400;">Groß</div>
<div class="t" style="left:1122.3px;top:437px;font-size:11.85px;line-height:11.85px;color:#3f475a;font-weight:400;">Zielgruppe</div>
<div class="t" style="left:1275.7px;top:437px;font-size:11.85px;line-height:11.85px;color:#1c2130;font-weight:400;">Zielgruppe</div>
<div class="t" style="left:1122.3px;top:467px;font-size:11.85px;line-height:11.85px;color:#3f475a;font-weight:400;">Bedarf</div>
<div class="t" style="left:1275.7px;top:467px;font-size:11.85px;line-height:11.85px;color:#1c2130;font-weight:400;">Akut</div>
<div class="t" style="left:1122.3px;top:497px;font-size:11.85px;line-height:11.85px;color:#3f475a;font-weight:400;">Quelle</div>
<div class="t" style="left:1275.7px;top:497px;font-size:11.85px;line-height:11.85px;color:#1c2130;font-weight:400;">Messe</div>
<div class="t" style="left:1122.3px;top:527px;font-size:11.85px;line-height:11.85px;color:#3f475a;font-weight:400;">Volumen</div>
<div class="t" style="left:1275.7px;top:527px;font-size:11.85px;line-height:11.85px;color:#1c2130;font-weight:400;">Hoch</div>
<svg class="a" style="left:1254px;top:330px;" width="15" height="10" viewBox="0 0 15 10"><polyline points="1,8.5 5.5,4 8.5,6.5 13,2" fill="none" stroke="#4caf50" stroke-width="1.5"/><polygon points="9.5,1 14,1 14,5.5" fill="#4caf50"/></svg>
<svg class="a" style="left:1254px;top:373px;" width="14" height="16" viewBox="0 0 14 16"><path d="M7,15.5 L7,9 C7,7.5 4.5,6 3,3.2 M7,9 C7,7.5 9.5,6 11,3.2" fill="none" stroke="#4caf50" stroke-width="1.7"/><polygon points="0.6,0.6 5.4,1.6 1.9,5" fill="#4caf50"/><polygon points="13.4,0.6 8.6,1.6 12.1,5" fill="#4caf50"/></svg>
<svg class="a" style="left:1253px;top:405px;" width="16" height="13" viewBox="0 0 16 13"><rect x="0.7" y="2.9" width="12.3" height="9" fill="#4caf50"/><path d="M0.7,0.7 L14.7,0.7 L14.7,12" fill="none" stroke="#4caf50" stroke-width="1" stroke-dasharray="1.2,1.3"/></svg>
<svg class="a" style="left:1253.5px;top:433px;" width="15" height="16" viewBox="0 0 15 16"><circle cx="7.5" cy="8" r="5.3" fill="none" stroke="#4caf50" stroke-width="1.5"/><circle cx="7.5" cy="8" r="2.5" fill="#4caf50"/><path d="M7.5,0.5 V2.7 M7.5,13.3 V15.5 M0,8 H2.2 M12.8,8 H15" stroke="#4caf50" stroke-width="1.4"/></svg>
<svg class="a" style="left:1255.5px;top:466px;" width="12" height="11" viewBox="0 0 12 11"><polyline points="1,5.9 6,1.3 11,5.9" fill="none" stroke="#f44336" stroke-width="1.7"/><polyline points="1,10.1 6,5.5 11,10.1" fill="none" stroke="#f44336" stroke-width="1.7"/></svg>
<svg class="a" style="left:1254px;top:493.5px;" width="14" height="15" viewBox="0 0 14 15"><g fill="#4caf50"><circle cx="3" cy="1.8" r="1.5"/><circle cx="7" cy="1.8" r="1.5"/><circle cx="11" cy="1.8" r="1.5"/><rect x="1.5" y="3.6" width="3" height="1.5"/><rect x="5.5" y="3.6" width="3" height="1.5"/><rect x="9.5" y="3.6" width="3" height="1.5"/><rect x="0" y="5.6" width="14" height="1.3"/><circle cx="4" cy="9.3" r="1.5"/><circle cx="10" cy="9.3" r="1.5"/><rect x="1.5" y="11.5" width="5" height="2.5"/><rect x="7.5" y="11.5" width="5" height="2.5"/></g></svg>
<svg class="a" style="left:1253.5px;top:524px;" width="15" height="14" viewBox="0 0 15 14"><rect x="0.8" y="0.8" width="13.4" height="12.4" rx="0.8" fill="none" stroke="#f44336" stroke-width="1.5"/><polyline points="2.8,7.3 7.5,2.8 12.2,7.3" fill="none" stroke="#f44336" stroke-width="1.5"/><polyline points="2.8,11.3 7.5,6.8 12.2,11.3" fill="none" stroke="#f44336" stroke-width="1.5"/></svg>
<div class="t" style="left:1123.3px;top:600px;font-size:14.1px;line-height:14.1px;color:#1f2941;font-weight:400;">Notizen</div>
<svg class="a" style="left:1540px;top:603px;" width="14" height="9" viewBox="0 0 14 9"><polyline points="1.2,7.8 7,2 12.8,7.8" fill="none" stroke="#a7b3d8" stroke-width="1.6"/></svg>
<div class="t" style="left:1130.4px;top:639px;font-size:12.0px;line-height:12.0px;color:#1c2130;font-weight:400;">- zeigt Interesse an einer umfassenden Beratung zu erneuerbaren</div>
<div class="t" style="left:1130.4px;top:655px;font-size:12.0px;line-height:12.0px;color:#1c2130;font-weight:400;">Energiequellen sowie effizienter Energienutzung</div>
<div class="t" style="left:1130.4px;top:671px;font-size:12.0px;line-height:12.0px;color:#1c2130;font-weight:400;">- besonderer Fokus liegt auf Geothermie als Möglichkeit zur Deckung ihres</div>
<div class="t" style="left:1130.4px;top:687px;font-size:12.0px;line-height:12.0px;color:#1c2130;font-weight:400;">hohen Strombedarfs</div>
<div class="t" style="left:1130.4px;top:703px;font-size:12.0px;line-height:12.0px;color:#1c2130;font-weight:400;">- möchten Analyse des aktuellen Energiebedarfs und Identifizierung von</div>
<div class="t" style="left:1130.4px;top:719px;font-size:12.0px;line-height:12.0px;color:#1c2130;font-weight:400;">Einsparpotenzialen</div>
<div class="t" style="left:1130.4px;top:735px;font-size:12.0px;line-height:12.0px;color:#1c2130;font-weight:400;">- Beratung bezüglich der Implementierung von Geothermie-Anlagen als</div>
<div class="t" style="left:1130.4px;top:751px;font-size:12.0px;line-height:12.0px;color:#1c2130;font-weight:400;">nachhaltige und langfristige Lösung zur Energiegewinnung</div>
<div class="t" style="left:1130.4px;top:767px;font-size:12.0px;line-height:12.0px;color:#1c2130;font-weight:400;">- Erarbeitung eines Konzepts zur Integration von Elektromobilität, inklusive</div>
<div class="t" style="left:1130.4px;top:783px;font-size:12.0px;line-height:12.0px;color:#1c2130;font-weight:400;">Empfehlung für Ladeinfrastruktur</div>
<div class="t" style="left:1130.4px;top:799px;font-size:12.0px;line-height:12.0px;color:#1c2130;font-weight:400;">&gt;&gt; Vor-Ort-Besichtigungen zur Bewertung von geothermischen Potenzialen</div>
<div class="t" style="left:1130.4px;top:815px;font-size:12.0px;line-height:12.0px;color:#1c2130;font-weight:400;">&gt;&gt; Analyse der bestehenden elektrischen Infrastruktur zur Einbindung von</div>
<div class="t" style="left:1130.4px;top:831px;font-size:12.0px;line-height:12.0px;color:#1c2130;font-weight:400;">Elektrofahrzeugen.</div>
<div class="t" style="left:1130.4px;top:847px;font-size:12.0px;line-height:12.0px;color:#1c2130;font-weight:400;">&gt;&gt; Entwicklung eines strategischen Plans zur schrittweisen Umsetzung der</div>
<div class="t" style="left:1130.4px;top:863px;font-size:12.0px;line-height:12.0px;color:#1c2130;font-weight:400;">empfohlenen Maßnahmen, mit Berücksichtigung von Fördermöglichkeiten</div>
<div class="t" style="left:1130.4px;top:895px;font-size:12.0px;line-height:12.0px;color:#1c2130;font-weight:400;">!! Aufgrund des hohen Energiebedarfs des Chemiekonzerns könnten</div>
<div class="t" style="left:1130.4px;top:911px;font-size:12.0px;line-height:12.0px;color:#1c2130;font-weight:400;">Kooperationen mit lokalen Energieproduzenten oder Investitionen in eigene</div>
<div class="t" style="left:1130.4px;top:927px;font-size:12.0px;line-height:12.0px;color:#1c2130;font-weight:400;">Energiegewinnungsanlagen sinnvoll sein</div>
<div class="t" style="left:1649.0px;top:227px;font-size:14.1px;line-height:14.1px;color:#1f2941;font-weight:400;">Aktionen</div>
<svg class="a" style="left:1650px;top:278px;" width="14" height="9" viewBox="0 0 14 9"><polyline points="1.2,1.2 7,7 12.8,1.2" fill="none" stroke="#2c3e8f" stroke-width="1.8"/></svg>
<svg class="a" style="left:1669px;top:275px;" width="17" height="14" viewBox="0 0 17 14"><path d="M0.5,2 Q0.5,0.8 1.7,0.8 L6,0.8 L7.5,2.5 L15,2.5 Q16.3,2.5 16.3,3.8 L16.3,12.5 Q16.3,13.3 15.3,13.3 L1.5,13.3 Q0.5,13.3 0.5,12.3Z" fill="#f2c14e"/><path d="M0.5,5 L16.3,5 L16.3,12.5 Q16.3,13.3 15.3,13.3 L1.5,13.3 Q0.5,13.3 0.5,12.3Z" fill="#ffd766"/></svg>
<div class="t" style="left:1690.8px;top:278px;font-size:11.85px;line-height:11.85px;color:#1c2130;font-weight:400;">Lead Management</div>
<svg class="a" style="left:1679px;top:309.2px;" width="14" height="14" viewBox="0 0 14 14"><circle cx="7" cy="7" r="7" fill="#b3d7f7"/><polygon points="5,3.6 10.6,7 5,10.4" fill="#fff"/></svg>
<div class="t" style="left:1699.0px;top:312px;font-size:11.85px;line-height:11.85px;color:#b0b4bd;font-weight:400;">Ansprechpartner anlegen</div>
<svg class="a" style="left:1679px;top:344px;" width="14" height="14" viewBox="0 0 14 14"><circle cx="7" cy="7" r="7" fill="#1e88e5"/><polygon points="5,3.6 10.6,7 5,10.4" fill="#fff"/></svg>
<div class="t" style="left:1699.0px;top:347px;font-size:11.85px;line-height:11.85px;color:#1c2130;font-weight:400;">Anfrage anlegen</div>
<svg class="a" style="left:1679px;top:378px;" width="14" height="14" viewBox="0 0 14 14"><circle cx="7" cy="7" r="7" fill="#1e88e5"/><polygon points="5,3.6 10.6,7 5,10.4" fill="#fff"/></svg>
<div class="t" style="left:1699.0px;top:381px;font-size:11.9px;line-height:11.9px;color:#1c2130;font-weight:400;">Angebot anlegen</div>
<svg class="a" style="left:1620px;top:611px;" width="8" height="10" viewBox="0 0 8 10"><polyline points="1.5,1 6,5 1.5,9" fill="none" stroke="#222" stroke-width="2"/></svg>
<svg class="a" style="left:12px;top:88px;" width="16" height="26" viewBox="0 0 16 26"><path d="M0.3,4 Q0.3,0.7 3.6,0.7 L12.2,0.7 Q15.5,0.7 15.5,4 L15.5,25 L7.9,20.2 L0.3,25Z" fill="#2196f3"/></svg>
<svg class="a" style="left:10px;top:131px;" width="20" height="20" viewBox="0 0 20 20"><path d="M5,3.5 V2.8 Q5,1.3 6.5,1.3 L17.2,1.3 Q18.7,1.3 18.7,2.8 V13.5 Q18.7,15 17.2,15 H16.5" fill="none" stroke="#555" stroke-width="1.8"/><rect x="1.7" y="4.6" width="14.2" height="14.2" rx="1.8" fill="none" stroke="#3b6aa0" stroke-width="1.9"/></svg>
<svg class="a" style="left:9px;top:169px;" width="23" height="23" viewBox="0 0 23 23"><path d="M5.3,5 A9,9 0 1 0 11.3,2.8" fill="none" stroke="#2d8bd7" stroke-width="2.1"/><polygon points="11.5,-0.5 11.5,6.5 7.3,3" fill="#2d8bd7"/><polyline points="8.5,7 11.6,11.8 8.6,14.6" fill="none" stroke="#222" stroke-width="1.3"/></svg>
<svg class="a" style="left:7px;top:210px;" width="26" height="24" viewBox="0 0 26 24"><rect x="1.5" y="0.9" width="17.5" height="14.3" rx="1.2" fill="#fff" stroke="#3f51b5" stroke-width="1.6"/><rect x="1.5" y="0.9" width="6.5" height="14.3" fill="#3f51b5"/><g stroke="#fff" stroke-width="1"><line x1="2.7" y1="4" x2="6.8" y2="4"/><line x1="2.7" y1="7" x2="6.8" y2="7"/><line x1="2.7" y1="10" x2="6.8" y2="10"/><line x1="2.7" y1="13" x2="6.8" y2="13"/></g><line x1="20" y1="17" x2="24.5" y2="22" stroke="#37474f" stroke-width="2"/><circle cx="17" cy="14.3" r="4.6" fill="#64b5f6" stroke="#37474f" stroke-width="1.3"/></svg>
<svg class="a" style="left:8px;top:249px;" width="25" height="25" viewBox="0 0 25 25"><g transform="translate(12,12)" fill="#607d8b"><circle r="8.6"/><rect x="-2.8" y="-12" width="5.6" height="6" transform="rotate(0)"/><rect x="-2.8" y="-12" width="5.6" height="6" transform="rotate(60)"/><rect x="-2.8" y="-12" width="5.6" height="6" transform="rotate(120)"/><rect x="-2.8" y="-12" width="5.6" height="6" transform="rotate(180)"/><rect x="-2.8" y="-12" width="5.6" height="6" transform="rotate(240)"/><rect x="-2.8" y="-12" width="5.6" height="6" transform="rotate(300)"/></g><circle cx="12" cy="12" r="5.6" fill="#2196f3"/><polygon points="10,8.6 15.5,12 10,15.4" fill="#fff"/></svg>
<svg class="a" style="left:10px;top:288px;" width="20" height="26" viewBox="0 0 20 26"><path d="M1,1 L12.5,1 L18.5,7 L18.5,24.5 L1,24.5Z" fill="#eceff6" stroke="#78909c" stroke-width="1.5"/><polygon points="12.5,1 18.5,7 12.5,7" fill="#78909c"/><circle cx="10" cy="14" r="5.8" fill="#4285f4"/><path d="M10,14 L10,8.2 A5.8,5.8 0 0 1 15.8,14Z" fill="#ef6c00"/><path d="M10,14 L15.8,14 A5.8,5.8 0 0 1 13.6,18.6Z" fill="#fbc02d"/></svg>
<svg class="a" style="left:10px;top:331px;" width="20" height="20" viewBox="0 0 20 20"><line x1="1.5" y1="1.5" x2="10" y2="10" stroke="#90a4ae" stroke-width="1.6"/><path d="M16.5,2.2 A4.2,4.2 0 1 0 17.8,7.3 L15.6,7.4 L14.3,5.7 L15.3,3.6Z" fill="#546e7a"/><line x1="14" y1="6" x2="2.5" y2="17.5" stroke="#546e7a" stroke-width="3.2" stroke-linecap="round"/><line x1="9" y1="9" x2="17" y2="17" stroke="#ffb300" stroke-width="4" stroke-linecap="round"/></svg>
<svg class="a" style="left:8px;top:381px;" width="24" height="26" viewBox="0 0 24 26"><path d="M1,1 L15,1 L19,5 L19,24.5 L1,24.5Z" fill="#eef1f8" stroke="#78909c" stroke-width="1.4"/><polygon points="15,1 19,5 15,5" fill="#78909c"/><rect x="3.5" y="3.5" width="6" height="2.6" fill="#9bc53d"/><line x1="3.3" y1="9.2" x2="14" y2="9.2" stroke="#78909c" stroke-width="1.2"/><line x1="3.3" y1="12.5" x2="14" y2="12.5" stroke="#78909c" stroke-width="1.2"/><line x1="3.3" y1="21.3" x2="16" y2="21.3" stroke="#78909c" stroke-width="1"/><path d="M4,19.5 C5,14 7,14 6,19 C7,17 8,17 8.5,18.5 L12,18" fill="none" stroke="#1e5bd8" stroke-width="1"/><path d="M16.2,7.5 Q16.2,4.6 19.5,4.6 Q22.9,4.6 22.9,7.5 L20.8,18.2 L18.3,18.2Z" fill="#e8291c"/><circle cx="19.6" cy="21.6" r="2.6" fill="#e8291c"/></svg>
<svg class="a" style="left:8px;top:424px;" width="23" height="20" viewBox="0 0 23 20"><path d="M1,3 Q1,0.8 3,0.8 L9,0.8 L10.5,2.3 L20,2.3 Q22,2.3 22,4.3 L22,17.3 Q22,18.5 20.8,18.5 L2.2,18.5 Q1,18.5 1,17.3Z" fill="#b9c7d0"/><rect x="3" y="6" width="8.5" height="9.5" fill="#2c8fd6"/><circle cx="7.25" cy="10.2" r="2.1" fill="#f4a23a"/><path d="M5.1,9.8 Q5,7.3 7.25,7.3 Q9.5,7.3 9.4,9.8Z" fill="#3a3a3a"/><path d="M3.6,15.5 Q4,12.6 7.25,12.6 Q10.5,12.6 10.9,15.5Z" fill="#d84a2a"/><g stroke="#4a86b5" stroke-width="0.9"><line x1="13.5" y1="8.5" x2="20" y2="8.5"/><line x1="13.5" y1="11.3" x2="20" y2="11.3"/><line x1="13.5" y1="14.1" x2="19" y2="14.1"/></g><rect x="4" y="18.3" width="1.5" height="1.7" fill="#fff"/><rect x="16.5" y="18.3" width="1.5" height="1.7" fill="#fff"/></svg>
<svg class="a" style="left:10px;top:461px;" width="21" height="25" viewBox="0 0 21 25"><path d="M0,24.6 Q0.5,17 7,16.5 L13,16.5 Q19.5,17 20,24.6Z" fill="#546e7a"/><polygon points="7.5,16.5 12.5,16.5 10,19.5" fill="#fff"/><polygon points="9.3,17.5 10.7,17.5 11.2,23.5 10,24.4 8.8,23.5" fill="#e53935"/><rect x="8" y="13" width="4" height="4" fill="#f39c2a"/><circle cx="10" cy="9.5" r="5.7" fill="#ffa726"/><path d="M4.2,9 Q3.5,3 9.5,3 Q16,2.5 15.8,9 L14.8,7 Q10,6.5 6,5.5 L5,9Z" fill="#333"/></svg>
<svg class="a" style="left:10px;top:503px;" width="21" height="22" viewBox="0 0 21 22"><rect x="0" y="0.8" width="20" height="2.2" fill="#64a8e0"/><polygon points="0,2.5 20,2.5 13,9.8 7,9.8" fill="#4a90cf"/><polygon points="7,9.5 13,9.5 13,21 7,17" fill="#0b72d5"/></svg>
<svg class="a" style="left:8px;top:542px;" width="24" height="24" viewBox="0 0 24 24"><g transform="translate(12,12) rotate(-45)"><path d="M-11,-5.5 L11,-5.5 L11,-2.3 A2.3,2.3 0 0 0 11,2.3 L11,5.5 L-11,5.5 L-11,2.3 A2.3,2.3 0 0 0 -11,-2.3Z" fill="#ffa726" stroke="#ffa726" stroke-width="1" stroke-linejoin="round"/><line x1="5" y1="-5" x2="5" y2="5" stroke="#ffe0b2" stroke-width="0.9" stroke-dasharray="1.3,1.3"/></g></svg>
<svg class="a" style="left:10px;top:583px;" width="21" height="22" viewBox="0 0 21 22"><rect x="5" y="1" width="4" height="14" rx="1.8" fill="#bde0f8" stroke="#90caf9" stroke-width="0.6"/><rect x="12" y="1" width="4" height="14" rx="1.8" fill="#bde0f8" stroke="#90caf9" stroke-width="0.6"/><rect x="5.9" y="6" width="2.2" height="7.5" rx="1.1" fill="#fdd835"/><rect x="12.9" y="7" width="2.2" height="6.5" rx="1.1" fill="#e91e63"/><g fill="#546e7a"><rect x="0" y="5" width="20" height="1.8"/><rect x="0" y="19" width="20" height="2"/><rect x="1" y="5" width="1.6" height="15"/><rect x="17.4" y="5" width="1.6" height="15"/></g></svg>
<svg class="a" style="left:9px;top:621px;" width="21" height="25" viewBox="0 0 21 25"><rect x="5" y="0.8" width="15" height="19.5" fill="#90a4ae"/><g fill="#2196f3"><rect x="7.0" y="3.0" width="2.8" height="2.2"/><rect x="11.2" y="3.0" width="2.8" height="2.2"/><rect x="15.4" y="3.0" width="2.8" height="2.2"/><rect x="7.0" y="6.6" width="2.8" height="2.2"/><rect x="11.2" y="6.6" width="2.8" height="2.2"/><rect x="15.4" y="6.6" width="2.8" height="2.2"/><rect x="7.0" y="10.2" width="2.8" height="2.2"/><rect x="11.2" y="10.2" width="2.8" height="2.2"/><rect x="15.4" y="10.2" width="2.8" height="2.2"/><rect x="7.0" y="13.8" width="2.8" height="2.2"/><rect x="11.2" y="13.8" width="2.8" height="2.2"/><rect x="15.4" y="13.8" width="2.8" height="2.2"/><rect x="7.0" y="17.4" width="2.8" height="2.2"/><rect x="11.2" y="17.4" width="2.8" height="2.2"/><rect x="15.4" y="17.4" width="2.8" height="2.2"/></g><path d="M0.2,24.6 Q0.5,18.5 6.5,18.3 L8,18.3 Q13.5,18.5 13.8,24.6Z" fill="#3f51b5"/><polygon points="6.3,18.3 7.7,18.3 8,23 7,24 6,23" fill="#e53935"/><circle cx="7" cy="13.8" r="4.3" fill="#ffa726"/><path d="M2.7,13.6 Q2.3,9 7,9 Q11.8,9 11.4,13.5 L10.5,11.8 L4,11.5Z" fill="#333"/></svg>
<svg class="a" style="left:11px;top:661px;" width="19" height="26" viewBox="0 0 19 26"><rect x="1.1" y="4.1" width="16.6" height="20.6" rx="1.8" fill="#fff" stroke="#455a64" stroke-width="1.9"/><rect x="5" y="2.6" width="8.8" height="3.2" rx="1" fill="#90a4ae"/><circle cx="9.4" cy="2.6" r="1.8" fill="none" stroke="#90a4ae" stroke-width="1.2"/><polyline points="4,14.5 7.7,18.3 14.8,10.8" fill="none" stroke="#43a047" stroke-width="2.4"/></svg>
<svg class="a" style="left:8px;top:701px;" width="25" height="25" viewBox="0 0 25 25"><rect x="17.2" y="2.5" width="2.6" height="5.5" fill="#c5cae9"/><polygon points="12.3,3.5 21.5,12 21.5,24.5 3.2,24.5 3.2,12" fill="#e8eaf6"/><rect x="3.2" y="21" width="18.3" height="3.5" fill="#c5cae9"/><polyline points="0.8,13.5 12.3,2.2 23.8,13.5" fill="none" stroke="#c62828" stroke-width="2.3"/><rect x="9.8" y="15.5" width="5" height="9" fill="#e64a19"/><circle cx="12.3" cy="10.5" r="1.5" fill="#1565c0"/></svg>
<svg class="a" style="left:9px;top:12px;overflow:visible" width="58" height="26" viewBox="0 0 58 26"><g fill="#fff"><path d="M0.7,3.7 H10.6 V6.9 H4.5 V10.9 H10 V14 H4.5 V19.1 H10.8 V22.3 H0.7Z"/><path d="M11.6,3.7 H15.6 L19.8,17.8 L24,3.7 H28 L21.8,22.3 H17.8Z"/><rect x="30.2" y="3.7" width="3.6" height="18.6"/><path d="M48.4,0.3 C50,7 52,14 54,20 L46.3,20.8 C48.2,14 48.7,7 48.4,0.3Z"/><path d="M47.2,5.5 C46.5,12 44.5,17 41.3,21.8 L44.8,21.6 C46.6,16 47.4,10 47.2,5.5Z"/><path d="M41,25 C46,24 51,22.5 55.3,20.3 L54.2,22.2 C50,24 45.5,25.3 41,25Z"/></g><circle cx="38" cy="6.3" r="2.5" fill="none" stroke="#fff" stroke-width="0.7"/><path d="M37.2,7.8 V4.9 H38.3 Q39.1,4.9 39.1,5.7 Q39.1,6.4 38.2,6.4 L39.1,7.8" fill="none" stroke="#fff" stroke-width="0.5"/></svg>
<svg class="a" style="left:1568px;top:12px;" width="22" height="26" viewBox="0 0 22 26"><path fill="#fff" fill-rule="evenodd" d="M10.4,3 Q11,2.6 11.6,3 L15,5 L15,7 L14,7 L14,9 L16,9 L16,11 L15,11 L17,23 L5,23 L7,11 L6,11 L6,9 L8,9 L8,7 L7,7 L7,5Z M9,11.3 H13 V12.9 H9Z M8.2,15.2 H13.8 V16.8 H8.2Z M7.4,19.2 H14.6 V20.8 H7.4Z"/></svg>
<svg class="a" style="left:1606px;top:14px;overflow:visible" width="18" height="22" viewBox="0 0 18 22"><path d="M8.2,1.6 Q8.2,0.6 9,0.6 Q9.8,0.6 9.8,1.6 Q14.3,3.2 14.3,9 L14.3,14.2 L17.2,18.6 L0.8,18.6 L3.7,14.2 L3.7,9 Q3.7,3.2 8.2,1.6Z" fill="#fff"/><path d="M6.9,19.3 Q9,21.8 11.1,19.3Z" fill="#fff"/></svg>
<div class="a" style="left:1615px;top:16px;width:12px;height:12px;border-radius:50%;background:#ea3b2e;color:#fff;font-size:8.5px;line-height:12px;text-align:center;letter-spacing:-0.6px;font-weight:400">31</div>
<svg class="a" style="left:1641px;top:14px;" width="21" height="22" viewBox="0 0 21 22"><g fill="#fff"><circle cx="16.1" cy="3.9" r="3.0"/><circle cx="3.9" cy="11" r="3.0"/><circle cx="16.1" cy="18.1" r="3.0"/></g><path d="M16.1,3.9 L3.9,11 L16.1,18.1" fill="none" stroke="#fff" stroke-width="1.4"/></svg>
<svg class="a" style="left:1679px;top:16px;" width="18" height="18" viewBox="0 0 18 18"><path d="M9,1 H2.5 Q1,1 1,2.5 V15.5 Q1,17 2.5,17 H15.5 Q17,17 17,15.5 V9.3" fill="none" stroke="#fff" stroke-width="2"/><path d="M11,1 H17 V7" fill="none" stroke="#fff" stroke-width="2"/><line x1="16.5" y1="1.5" x2="6" y2="12" stroke="#fff" stroke-width="1.8"/></svg>
<svg class="a" style="left:1713px;top:14px;" width="22" height="22" viewBox="0 0 22 22"><circle cx="11" cy="11" r="9.3" fill="none" stroke="#fff" stroke-width="1.9"/><g fill="#fff"><circle cx="11" cy="6.3" r="1.5"/><circle cx="11" cy="11" r="1.5"/><circle cx="11" cy="15.7" r="1.5"/></g></svg>
<svg class="a" style="left:204.5px;top:59px;" width="14.5" height="14.5" viewBox="0 0 20 20"><rect x="0" y="0" width="20" height="2.3" rx="1" fill="#6aaee5"/><polygon points="0.3,1.8 19.7,1.8 12.9,9.3 7.1,9.3" fill="#4a8fcd"/><polygon points="7.1,9 12.9,9 12.9,20 7.1,16.2" fill="#0b72d5"/></svg>
<svg class="a" style="left:104px;top:91px;" width="14" height="14" viewBox="0 0 20 20"><rect x="0" y="0" width="20" height="2.3" rx="1" fill="#6aaee5"/><polygon points="0.3,1.8 19.7,1.8 12.9,9.3 7.1,9.3" fill="#4a8fcd"/><polygon points="7.1,9 12.9,9 12.9,20 7.1,16.2" fill="#0b72d5"/></svg>
<svg class="a" style="left:178px;top:91px;" width="14" height="14" viewBox="0 0 20 20"><rect x="0" y="0" width="20" height="2.3" rx="1" fill="#6aaee5"/><polygon points="0.3,1.8 19.7,1.8 12.9,9.3 7.1,9.3" fill="#4a8fcd"/><polygon points="7.1,9 12.9,9 12.9,20 7.1,16.2" fill="#0b72d5"/></svg>
<svg class="a" style="left:51.7px;top:159.5px;" width="26.6" height="26.6" viewBox="0 0 20 20"><rect x="0" y="0" width="20" height="2.3" rx="1" fill="#6aaee5"/><polygon points="0.3,1.8 19.7,1.8 12.9,9.3 7.1,9.3" fill="#4a8fcd"/><polygon points="7.1,9 12.9,9 12.9,20 7.1,16.2" fill="#0b72d5"/></svg>
<svg class="a" style="left:48px;top:59px;" width="14" height="14" viewBox="0 0 14 14"><polygon points="7,1.5 12.5,7 12.5,13.5 1.5,13.5 1.5,7" fill="#eceff7"/><rect x="1.5" y="12" width="11" height="1.5" fill="#c5cae9"/><polyline points="0.4,7.6 7,1.2 13.6,7.6" fill="none" stroke="#c62828" stroke-width="1.5"/><rect x="5.5" y="9" width="3" height="4.5" fill="#e64a19"/><circle cx="7" cy="6" r="0.9" fill="#1565c0"/><rect x="10" y="2" width="1.5" height="3" fill="#c5cae9"/></svg>
<svg class="a" style="left:355.5px;top:62px;" width="9" height="8" viewBox="0 0 9 8"><path d="M1,0.8 L8,7.2 M8,0.8 L1,7.2" stroke="#2e4799" stroke-width="2.2"/></svg>
<svg class="a" style="left:161.5px;top:94px;" width="8" height="9" viewBox="0 0 8 9"><polyline points="1.5,0.8 6,4.5 1.5,8.2" fill="none" stroke="#3b4a9c" stroke-width="1.4"/></svg>
<svg class="a" style="left:52px;top:122px;" width="18" height="18" viewBox="0 0 18 18"><line x1="3" y1="15" x2="14.8" y2="3.2" stroke="#f9a825" stroke-width="3.4"/><line x1="14.2" y1="3.8" x2="16" y2="2" stroke="#ef9a9a" stroke-width="3.4"/><polygon points="1.2,16.8 1.9,13.2 4.8,16.1" fill="#5d4037"/></svg>
<svg class="a" style="left:150px;top:124px;" width="15" height="15" viewBox="0 0 15 15"><path d="M0.5,0.5 H11 L14,3.5 V13.8 H0.5Z" fill="#3f95e0"/><rect x="3" y="0.5" width="7" height="4.3" fill="#b0bec5"/><rect x="7.3" y="1.2" width="1.7" height="2.8" fill="#37474f"/><rect x="2.5" y="7.2" width="9.5" height="6.6" fill="#f5f9fc"/><g stroke="#8fa3b0" stroke-width="0.8"><line x1="3.5" y1="9" x2="11" y2="9"/><line x1="3.5" y1="11" x2="11" y2="11"/><line x1="3.5" y1="12.9" x2="11" y2="12.9"/></g></svg>
<svg class="a" style="left:240px;top:124px;" width="17" height="16" viewBox="0 0 17 16"><path d="M0.5,0.5 H11 L14,3.5 V13.8 H0.5Z" fill="#3f95e0"/><rect x="3" y="0.5" width="7" height="4.3" fill="#b0bec5"/><rect x="7.3" y="1.2" width="1.7" height="2.8" fill="#37474f"/><rect x="2.5" y="7.2" width="9.5" height="6.6" fill="#f5f9fc"/><g stroke="#8fa3b0" stroke-width="0.8"><line x1="3.5" y1="9" x2="11" y2="9"/><line x1="3.5" y1="11" x2="11" y2="11"/><line x1="3.5" y1="12.9" x2="11" y2="12.9"/></g><path d="M8,7.5 L15.5,14.8 M15.5,7.5 L8,14.8" stroke="#3f51b5" stroke-width="1.6"/></svg>
<svg class="a" style="left:407.5px;top:123.5px;" width="15" height="15" viewBox="0 0 15 15"><circle cx="7.5" cy="7.5" r="7.2" fill="#388e3c"/><path d="M7.5,3.5 V11.5 M3.5,7.5 H11.5" stroke="#fff" stroke-width="2.4"/></svg>
<svg class="a" style="left:504px;top:122px;" width="14" height="17" viewBox="0 0 14 17"><rect x="0.5" y="1.8" width="13" height="2.2" rx="0.8" fill="#e53935"/><rect x="5" y="0.3" width="4" height="2" rx="0.8" fill="#e53935"/><path d="M1.5,4.5 H12.5 L11.7,15.8 Q11.6,16.6 10.8,16.6 H3.2 Q2.4,16.6 2.3,15.8Z" fill="#e53935"/><g stroke="#ffcdd2" stroke-width="0.9"><line x1="4.8" y1="6.5" x2="4.8" y2="14.5"/><line x1="7" y1="6.5" x2="7" y2="14.5"/><line x1="9.2" y1="6.5" x2="9.2" y2="14.5"/></g></svg>
<svg class="a" style="left:533px;top:122px;" width="17" height="18" viewBox="0 0 17 18"><g opacity="0.45"><path d="M4,0.5 H10 L12.5,3 V12 H4Z" fill="#eceff1" stroke="#90a4ae" stroke-width="0.9"/><path d="M0.7,3.5 H7 L9.5,6 V15.5 H0.7Z" fill="#eceff1" stroke="#90a4ae" stroke-width="0.9"/><g stroke="#90a4ae" stroke-width="0.7"><line x1="2.3" y1="8" x2="7.5" y2="8"/><line x1="2.3" y1="10" x2="7.5" y2="10"/><line x1="2.3" y1="12" x2="7.5" y2="12"/></g><circle cx="12" cy="13.5" r="4.2" fill="#66bb6a"/><path d="M12,11.3 V15.7 M9.8,13.5 H14.2" stroke="#fff" stroke-width="1.3"/></g></svg>
<svg class="a" style="left:556.5px;top:128px;" width="9" height="5" viewBox="0 0 9 5"><polygon points="0.5,0.5 8.5,0.5 4.5,4.5" fill="#a9b4e0"/></svg>
<svg class="a" style="left:575px;top:122px;" width="16" height="17" viewBox="0 0 16 17"><path d="M13.3,8.5 A5.8,5.8 0 1 1 10.7,3.6" fill="none" stroke="#3949ab" stroke-width="2.2"/><polygon points="8.5,0 14.5,2.8 9.6,7" fill="#3949ab"/></svg>
<svg class="a" style="left:605px;top:125px;" width="2" height="12" viewBox="0 0 2 12"><line x1="1" y1="0" x2="1" y2="12" stroke="#a6b0d8" stroke-width="1" stroke-dasharray="1.5,1"/></svg>
<svg class="a" style="left:650px;top:125px;" width="2" height="12" viewBox="0 0 2 12"><line x1="1" y1="0" x2="1" y2="12" stroke="#a6b0d8" stroke-width="1" stroke-dasharray="1.5,1"/></svg>
<svg class="a" style="left:621px;top:123px;" width="16" height="16" viewBox="0 0 16 16"><g opacity="0.5"><rect x="3.5" y="0.5" width="9" height="4" rx="0.8" fill="#bdbdbd"/><rect x="0.5" y="4" width="15" height="8" rx="1.8" fill="#9e9e9e"/><rect x="3.5" y="9" width="9" height="6" fill="#e0e0e0" stroke="#9e9e9e" stroke-width="0.8"/><line x1="5" y1="11.5" x2="11" y2="11.5" stroke="#9e9e9e" stroke-width="0.7"/></g></svg>
<svg class="a" style="left:665px;top:122px;" width="16" height="18" viewBox="0 0 16 18"><path d="M4.5,7 V4.8 Q4.5,1.2 8,1.2 Q11.5,1.2 11.5,4.8 V7" fill="none" stroke="#546e7a" stroke-width="2"/><rect x="0.8" y="6.3" width="14.4" height="10.7" rx="1.5" fill="#fdd835" stroke="#e0b000" stroke-width="0.8"/><circle cx="8" cy="10" r="1.5" fill="#37474f"/><rect x="7.2" y="10" width="1.6" height="4.2" fill="#37474f"/></svg>
<svg class="a" style="left:689.5px;top:128.5px;" width="9" height="5" viewBox="0 0 9 5"><polygon points="0.5,0.5 8.5,0.5 4.5,4.5" fill="#2e3f99"/></svg>
<svg class="a" style="left:709px;top:123px;" width="13" height="16" viewBox="0 0 13 16"><g fill="#c4c4c4" stroke="#a8a8a8" stroke-width="0.6"><rect x="0.3" y="0.3" width="12" height="3.6"/><rect x="0.3" y="5.5" width="12" height="3.6"/><rect x="0.3" y="10.7" width="12" height="3.6"/></g><g stroke="#42a5f5" stroke-width="1"><line x1="1" y1="4.7" x2="11.7" y2="4.7"/><line x1="1" y1="9.9" x2="11.7" y2="9.9"/></g></svg>
<svg class="a" style="left:738px;top:122px;" width="16" height="18" viewBox="0 0 16 18"><path d="M1,3 Q1,1 3,1 L7,1 Q9,1 9,3 L9,12.5 L5,10.5 L1,12.6Z" fill="#2196f3"/><circle cx="10.5" cy="12.2" r="4.6" fill="#388e3c" stroke="#fff" stroke-width="0.6"/><path d="M10.5,9.8 V14.6 M8.1,12.2 H12.9" stroke="#fff" stroke-width="1.3"/></svg>
<svg class="a" style="left:767px;top:123px;" width="15" height="15" viewBox="0 0 15 15"><polygon points="7.5,1 9.3,5.3 14,5.6 10.4,8.6 11.6,13.3 7.5,10.8 3.4,13.3 4.6,8.6 1,5.6 5.7,5.3" fill="none" stroke="#2196f3" stroke-width="1.4" stroke-linejoin="round"/></svg>
<svg class="a" style="left:796px;top:125px;" width="18" height="12" viewBox="0 0 18 12"><path d="M1,5.5 Q9,-2.5 17,5.5 Q9,13.5 1,5.5Z" fill="#fff" stroke="#37474f" stroke-width="1.5"/><circle cx="9" cy="5.5" r="3.3" fill="#2196f3"/><circle cx="9" cy="5.5" r="1.5" fill="#111"/></svg>
<div class="a" style="left:1633px;top:123px;width:48px;height:16px;background:#388e3c;border-radius:1.5px"></div>
<div class="t" style="left:1642.5px;top:126px;font-size:12.6px;line-height:12.6px;color:#fff;font-weight:700;letter-spacing:-0.75px">100%</div>
<svg class="a" style="left:1693px;top:124px;" width="14" height="14" viewBox="0 0 14 14"><circle cx="7" cy="7" r="7" fill="#2196f3"/><rect x="6.1" y="6" width="1.8" height="4.6" fill="#fff"/><circle cx="7" cy="4" r="1" fill="#fff"/></svg>
<svg class="a" style="left:1722px;top:125px;" width="2" height="12" viewBox="0 0 2 12"><line x1="1" y1="0" x2="1" y2="12" stroke="#a6b0d8" stroke-width="1" stroke-dasharray="1.5,1"/></svg>
<svg class="a" style="left:1740px;top:125px;" width="13" height="12" viewBox="0 0 13 12"><g fill="#2e3fa5"><rect x="0" y="0.8" width="12.3" height="1.7"/><rect x="0" y="5" width="12.3" height="1.7"/><rect x="0" y="9.2" width="12.3" height="1.7"/></g></svg>
<svg class="a" style="left:1769px;top:125px;" width="11" height="12" viewBox="0 0 11 12"><rect x="0.5" y="0" width="1.9" height="12" fill="#b3bbe2"/><polygon points="10.5,0 10.5,12 3,6" fill="#b3bbe2"/></svg>
<svg class="a" style="left:1800px;top:125px;" width="9" height="12" viewBox="0 0 9 12"><polygon points="8,0 8,12 0.8,6" fill="#b3bbe2"/></svg>
<div class="t" style="left:1826.5px;top:126px;font-size:13.3px;line-height:13.3px;color:#1c2130;font-weight:400;letter-spacing:1.7px">1/1</div>
<svg class="a" style="left:1866px;top:125px;" width="9" height="12" viewBox="0 0 9 12"><polygon points="1,0 1,12 8.2,6" fill="#b3bbe2"/></svg>
<svg class="a" style="left:1894.5px;top:125px;" width="11" height="12" viewBox="0 0 11 12"><polygon points="0.5,0 0.5,12 8,6" fill="#b3bbe2"/><rect x="8.6" y="0" width="1.9" height="12" fill="#b3bbe2"/></svg>
<svg class="a" style="left:1880px;top:93px;" width="14" height="10" viewBox="0 0 14 10"><path d="M12.5,5 H2.5 M6,1 L2,5 L6,9" fill="none" stroke="#37474f" stroke-width="1.8"/></svg>
<svg class="a" style="left:1901.5px;top:94.5px;" width="9" height="5" viewBox="0 0 9 5"><polygon points="0.5,0.3 8.5,0.3 4.5,4.5" fill="#2e3f99"/></svg>
<div class="a" style="left:44px;top:1074px;width:142px;height:4px;background:#2e4799"></div>
<svg class="a" style="left:51.5px;top:1051px;" width="13" height="16" viewBox="0 0 13 16"><rect x="0.8" y="2.3" width="11.4" height="13" rx="1.2" fill="#fff" stroke="#546e7a" stroke-width="1.3"/><rect x="3.5" y="1.2" width="6" height="2.4" rx="0.8" fill="#b0bec5"/><circle cx="6.5" cy="1.4" r="1.1" fill="none" stroke="#b0bec5" stroke-width="0.8"/><polyline points="2.8,9 5.3,11.6 10.2,6.4" fill="none" stroke="#43a047" stroke-width="1.7"/></svg>
<div class="t" style="left:72.1px;top:1054px;font-size:11.7px;line-height:11.7px;color:#1c2130;font-weight:400;letter-spacing:-0.583px;">AKTIVITÄTEN (4)</div>
<svg class="a" style="left:168px;top:1055px;" width="8" height="8" viewBox="0 0 8 8"><path d="M1,1 L7,7 M7,1 L1,7" stroke="#2e4799" stroke-width="2.1"/></svg>
<svg class="a" style="left:195.5px;top:1051px;" width="16" height="16" viewBox="0 0 16 16"><path d="M0.7,0.7 H8.5 L11,3.2 V15.3 H0.7Z" fill="#eef1f8" stroke="#78909c" stroke-width="1"/><rect x="2.2" y="2.3" width="4" height="1.8" fill="#9bc53d"/><line x1="2.2" y1="6" x2="9" y2="6" stroke="#78909c" stroke-width="0.8"/><line x1="2.2" y1="8" x2="9" y2="8" stroke="#78909c" stroke-width="0.8"/><path d="M2.5,13 C3,10 4,10 3.8,12.5 C4.5,11.5 5,11.5 5.3,12.5 L8,12.3" fill="none" stroke="#1e88e5" stroke-width="0.7"/><path d="M10,6.5 Q10,3.5 12.5,3.5 Q15,3.5 15,6 Q15,8 12.5,8.8 V10.5" fill="none" stroke="#1e88e5" stroke-width="2"/><circle cx="12.5" cy="14" r="1.6" fill="#1e88e5"/></svg>
<div class="t" style="left:216.7px;top:1054px;font-size:11.7px;line-height:11.7px;color:#7d8290;font-weight:400;letter-spacing:-0.478px;">ANFRAGEN (1)</div>
<svg class="a" style="left:304px;top:1055px;" width="8" height="8" viewBox="0 0 8 8"><path d="M1,1 L7,7 M7,1 L1,7" stroke="#2e4799" stroke-width="2.1"/></svg>
<svg class="a" style="left:331.5px;top:1051px;" width="16" height="16" viewBox="0 0 16 16"><path d="M0.7,0.7 H8.5 L11,3.2 V15.3 H0.7Z" fill="#eef1f8" stroke="#78909c" stroke-width="1"/><rect x="2.2" y="2.3" width="4" height="1.8" fill="#9bc53d"/><line x1="2.2" y1="6" x2="9" y2="6" stroke="#78909c" stroke-width="0.8"/><line x1="2.2" y1="8" x2="9" y2="8" stroke="#78909c" stroke-width="0.8"/><path d="M2.5,13 C3,10 4,10 3.8,12.5 C4.5,11.5 5,11.5 5.3,12.5 L8,12.3" fill="none" stroke="#1e88e5" stroke-width="0.7"/><path d="M11.2,3.5 H14.3 L13.5,11 H12Z" fill="#e8291c"/><circle cx="12.75" cy="13.8" r="1.6" fill="#e8291c"/></svg>
<div class="t" style="left:353.3px;top:1054px;font-size:11.7px;line-height:11.7px;color:#7d8290;font-weight:400;letter-spacing:-0.688px;">ANGEBOTE (1)</div>
<svg class="a" style="left:439.3px;top:1055px;" width="8" height="8" viewBox="0 0 8 8"><path d="M1,1 L7,7 M7,1 L1,7" stroke="#2e4799" stroke-width="2.1"/></svg>
<svg class="a" style="left:472px;top:1051px;" width="4" height="15" viewBox="0 0 4 15"><g fill="#2e4799"><circle cx="2" cy="2.5" r="1.3"/><circle cx="2" cy="7.5" r="1.3"/><circle cx="2" cy="12.5" r="1.3"/></g></svg>
<div class="t" style="left:488.3px;top:1055px;font-size:11.5px;line-height:11.5px;color:#7d8290;font-weight:400;letter-spacing:-0.958px;">WEITERE BEREICHE</div>
<svg class="a" style="left:966px;top:1034px;" width="10" height="8" viewBox="0 0 10 8"><polyline points="1,1.5 5,5.5 9,1.5" fill="none" stroke="#111" stroke-width="1.8"/></svg>
<svg class="a" style="left:986.5px;top:1033.5px;" width="10" height="8" viewBox="0 0 10 8"><polyline points="1,6.5 5,2.5 9,6.5" fill="none" stroke="#111" stroke-width="1.8"/></svg></body></html>
